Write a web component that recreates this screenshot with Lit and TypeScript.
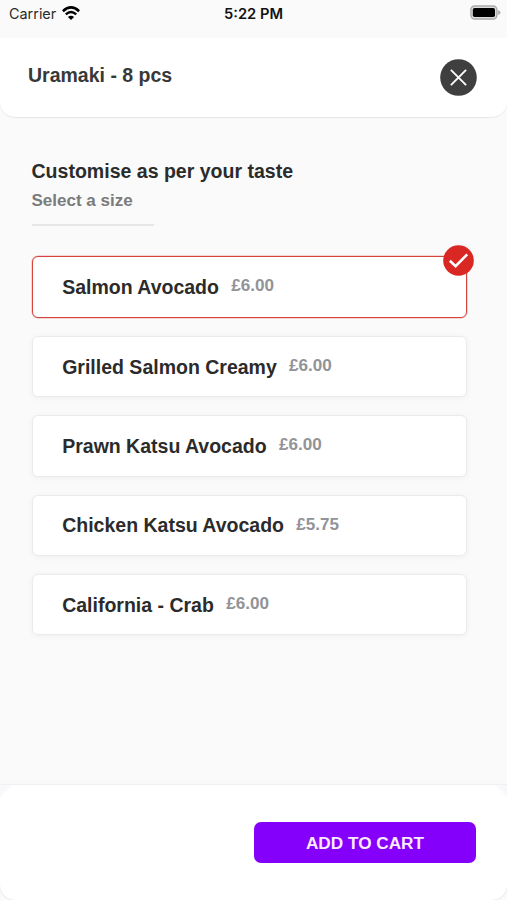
import { LitElement, html, css, svg, nothing } from "lit";
import { customElement, property, state } from "lit/decorators.js";
import { classMap } from "lit/directives/class-map.js";

interface Option {
  name: string;
  price: string;
}

const OPTIONS: Option[] = [
  { name: "Salmon Avocado", price: "£6.00" },
  { name: "Grilled Salmon Creamy", price: "£6.00" },
  { name: "Prawn Katsu Avocado", price: "£6.00" },
  { name: "Chicken Katsu Avocado", price: "£5.75" },
  { name: "California - Crab", price: "£6.00" },
];

@customElement("status-bar")
export class StatusBar extends LitElement {
  static styles = css`
    :host {
      display: grid;
      grid-template-columns: 1fr auto 1fr;
      height: 37.5px;
      box-sizing: border-box;
      padding: 5px 6px 0 9px;
      align-items: start;
      font: 400 14.4px/18px Inter, "Liberation Sans", sans-serif;
      color: #111;
    }
    .carrier {
      display: flex;
      gap: 6px;
    }
    .label {
      color: #2b2b2b;
    }
    .wifi {
      display: block;
      margin-top: 0.5px;
    }
    .time {
      font-weight: 600;
      font-size: 14.7px;
      margin-right: 3px;
    }
    .battery {
      display: block;
      justify-self: end;
    }
  `;
  render() {
    return html`
      <div class="carrier">
        <span class="label">Carrier</span>
        <svg class="wifi" width="18" height="15" viewBox="0 0 18 15">
          ${svg`
            <path d="M0.9 5.2Q9 -2.4 17.1 5.2" fill="none" stroke="#000" stroke-width="2.6"/>
            <path d="M3.8 8.3Q9 3.6 14.2 8.3" fill="none" stroke="#000" stroke-width="2.4"/>
            <path d="M5.9 10.9Q9 8.4 12.1 10.9L9 14.1Z" fill="#000"/>`}
        </svg>
      </div>
      <span class="time">5:22 PM</span>
      <svg class="battery" width="31" height="15" viewBox="0 0 31 15">
        <rect x="0.9" y="1" width="26" height="13" rx="3.8" fill="#ddd" stroke="#aaa" stroke-width="1.4" />
        <rect x="2.8" y="2.9" width="22.2" height="9.2" rx="1.8" fill="#000" />
        <path d="M28.2 4.9Q30.4 5.9 30.4 7.5T28.2 10.1Z" fill="#aaa" />
      </svg>
    `;
  }
}

@customElement("option-card")
export class OptionCard extends LitElement {
  @property() name = "";
  @property() price = "";
  @property({ type: Boolean }) selected = false;

  static styles = css`
    :host {
      display: block;
      position: relative;
    }
    .card {
      box-sizing: border-box;
      width: 100%;
      height: 61.4px;
      display: flex;
      align-items: center;
      gap: 12.3px;
      padding: 0 30px 0 29.7px;
      background: #fff;
      border: 1px solid #ebebeb;
      border-radius: 6px;
      box-shadow: 0 1px 6px rgba(0, 0, 0, 0.05);
    }
    .card.selected {
      border-color: #d64440;
      box-shadow: 0 0 0 0.5px rgba(214, 68, 64, 0.4);
    }
    .name {
      font-size: 19.5px;
      line-height: 24px;
      color: #2b2b2b;
      padding-top: 0.4px;
    }
    .price {
      font-size: 17.1px;
      line-height: 20px;
      color: #919397;
      margin-bottom: 1.4px;
    }
    .tick {
      position: absolute;
      right: -7px;
      top: -11px;
      display: block;
    }
  `;
  render() {
    return html`
      <div class=${classMap({ card: true, selected: this.selected })}>
        <span class="name">${this.name}</span>
        <span class="price">${this.price}</span>
      </div>
      ${this.selected
        ? html`<svg class="tick" width="31" height="31" viewBox="0 0 31 31">
            <circle cx="15.5" cy="15.5" r="15.3" fill="#d92723" />
            <path d="M6.8 15.8L12.6 21.2L24.2 9.4" fill="none" stroke="#fff" stroke-width="2.6" />
          </svg>`
        : nothing}
    `;
  }
}

@customElement("app-root")
export class AppRoot extends LitElement {
  @state() private selected = 0;

  static styles = css`
    :host {
      display: flex;
      flex-direction: column;
      height: 900px;
      overflow: hidden;
      background: #fafafa;
      font-family: "Liberation Sans", Arial, sans-serif;
      font-weight: 700;
      color: #2b2b2b;
    }
    .header {
      display: flex;
      justify-content: space-between;
      align-items: flex-start;
      box-sizing: border-box;
      height: 79.5px;
      padding: 21.7px 30.4px 0 28px;
      background: #fff;
      border-radius: 0 0 15px 15px;
      box-shadow: 0 1px 1px rgba(0, 0, 0, 0.08);
    }
    .title {
      margin: 4px 0 0;
      font-size: 19.5px;
      line-height: 24px;
      color: #383838;
    }
    .close,
    .add {
      border: 0;
      padding: 0;
      font: inherit;
    }
    .close {
      background: none;
    }
    .close svg {
      display: block;
    }
    .content {
      flex: 1;
      padding: 42px 40px 0 31.5px;
    }
    .heading {
      margin: 0;
      font-size: 19.55px;
      line-height: 24px;
    }
    .sub {
      margin: 7px 0 0;
      font-size: 17px;
      line-height: 22px;
      color: #7b7b7b;
    }
    .rule {
      width: 122px;
      height: 2px;
      margin: 12px 0 30.4px;
      background: #e6e6e6;
    }
    .options {
      display: flex;
      flex-direction: column;
      gap: 18px;
    }
    .footer {
      display: flex;
      justify-content: flex-end;
      align-items: flex-start;
      box-sizing: border-box;
      height: 115px;
      padding: 37px 31px 0;
      background:
        linear-gradient(135deg, #f8f8fb 7px, transparent 10px),
        linear-gradient(225deg, #f8f8fb 7px, transparent 10px),
        #fff;
      border-radius: 0 0 15px 15px;
      box-shadow: 0 0 2px rgba(0, 0, 0, 0.16);
    }
    .add {
      width: 222px;
      height: 41px;
      border-radius: 7px;
      background: #8400fa;
      color: #fbeaff;
      font-size: 17.2px;
      line-height: 42px;
    }
  `;

  render() {
    return html`
      <status-bar></status-bar>
      <header class="header">
        <h1 class="title">Uramaki - 8 pcs</h1>
        <button class="close" aria-label="Close">
          <svg width="37" height="37" viewBox="0 0 37 37">
            <circle cx="18.5" cy="18.5" r="18.3" fill="#3f3f3f" />
            <path d="M11.4 11.4L25.6 25.6M25.6 11.4L11.4 25.6" stroke="#fff" stroke-width="1.9" stroke-linecap="round" />
          </svg>
        </button>
      </header>
      <main class="content">
        <h2 class="heading">Customise as per your taste</h2>
        <p class="sub">Select a size</p>
        <div class="rule"></div>
        <div class="options">
          ${OPTIONS.map(
            (o, i) => html`<option-card
              .name=${o.name}
              .price=${o.price}
              .selected=${i === this.selected}
              @click=${() => (this.selected = i)}
            ></option-card>`
          )}
        </div>
      </main>
      <footer class="footer">
        <button class="add">ADD TO CART</button>
      </footer>
    `;
  }
}
